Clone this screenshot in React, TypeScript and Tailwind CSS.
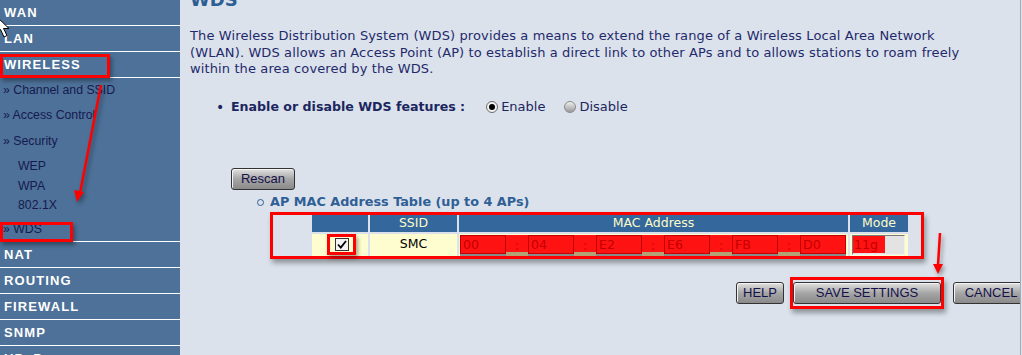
import React from "react";

const verdana = "font-['DejaVu_Sans','Verdana',sans-serif]";
const arial = "font-['Liberation_Sans','Arial',sans-serif]";

function NavItem({ label, children }: { label: string; children?: React.ReactNode }) {
  return (
    <div className="relative h-[26px] border-b border-white flex items-center pl-[4px] font-bold text-[13px] tracking-[1.1px] text-white shrink-0">
      {label}
      {children}
    </div>
  );
}

function SubItem({ label, className = "" }: { label: string; className?: string }) {
  return <div className={"flex items-center text-[12.3px] text-[#171a4f] " + className}>{label}</div>;
}

function Btn({ label, className = "" }: { label: string; className?: string }) {
  return (
    <div
      className={
        "h-[22px] flex items-center justify-center rounded-[3px] border border-[#333] bg-linear-to-b from-[#e2e2e2] via-[#a6a6a6] to-[#8a8a8a] shadow-[inset_1px_1px_0_#f4f4f4] text-[13px] text-[#14114a] shrink-0 " +
        arial +
        " " +
        className
      }
    >
      {label}
    </div>
  );
}

function MacBox({ v }: { v: string }) {
  return (
    <div className="w-[46px] h-[19px] bg-[#ff1212] border border-[#c00000] shadow-[0_2px_0_#8a8a8a] text-[12.5px] leading-[17px] pl-[2px] text-[#c40000]">
      {v}
    </div>
  );
}

function Colon() {
  return (
    <div className="w-[22px] h-[21px] flex flex-col">
      <div className="h-[17px] bg-[#ff1212] text-[12px] leading-[22px] text-center text-[#c40000]">:</div>
      <div className="h-[4px] bg-[#b3a274]" />
    </div>
  );
}

export default function App() {
  const mac = ["00", "04", "E2", "E6", "FB", "D0"];
  return (
    <div className={"relative flex w-[1022px] h-[355px] overflow-hidden bg-[#dbe2eb] " + arial}>
      {/* left menu */}
      <aside className="w-[180px] shrink-0 bg-[#4d7198] flex flex-col">
        <NavItem label="WAN" />
        <NavItem label="LAN" />
        <NavItem label="WIRELESS">
          <span className="absolute left-0 top-[2px] w-[110px] h-[24px] border-[3px] border-[#ff0000] shadow-[2px_3px_4px_rgba(0,0,0,0.35)]" />
        </NavItem>
        <div className="h-[164px] border-b border-white shrink-0 flex flex-col pl-[3px]">
          <SubItem label="» Channel and SSID" className="h-[25px]" />
          <SubItem label="» Access Control" className="h-[25px]" />
          <SubItem label="» Security" className="h-[26px]" />
          <SubItem label="WEP" className="h-[20px] mt-[2px] pl-[15px]" />
          <SubItem label="WPA" className="h-[20px] pl-[15px]" />
          <SubItem label="802.1X" className="h-[19px] pl-[15px]" />
          <div className="relative h-[20px] mt-[4px] flex items-center text-[12.3px] text-[#171a4f]">
            » WDS
            <span className="absolute -left-[3px] top-[3px] w-[73px] h-[20px] border-[3px] border-[#ff0000] shadow-[2px_3px_4px_rgba(0,0,0,0.35)]" />
          </div>
        </div>
        <NavItem label="NAT" />
        <NavItem label="ROUTING" />
        <NavItem label="FIREWALL" />
        <NavItem label="SNMP" />
        <NavItem label="UPnP" />
      </aside>

      {/* content */}
      <main className={"w-[841px] shrink-0 border-r border-[#a3abb6] overflow-hidden pl-[10px] flex flex-col " + verdana}>
        <div className="-mt-[11px] h-[22px] text-[18px] leading-[22px] font-bold text-[#2d5e93]">WDS</div>
        <p className="mt-[17px] text-[13px] tracking-[0.12px] leading-[16.5px] text-[#1f2a6c] whitespace-nowrap">
          The Wireless Distribution System (WDS) provides a means to extend the range of a Wireless Local Area Network
          <br />
          (WLAN). WDS allows an Access Point (AP) to establish a direct link to other APs and to allows stations to roam freely
          <br />
          within the area covered by the WDS.
        </p>

        <div className="mt-[21px] h-[17px] flex items-center text-[13px] text-[#1b2660]">
          <span className="ml-[26px] w-[15px] text-[14px]">•</span>
          <span className="font-bold text-[12.6px]">Enable or disable WDS features :</span>
          <span className="ml-[21px] w-[12px] h-[12px] rounded-full border border-[#6b6b6b] bg-[#f2f2f2] flex items-center justify-center">
            <span className="w-[6px] h-[6px] rounded-full bg-black" />
          </span>
          <span className="ml-[3px]">Enable</span>
          <span className="ml-[19px] w-[12px] h-[12px] rounded-full border border-[#8a8a8a] bg-linear-to-b from-[#f0f0f0] to-[#9a9a9a]" />
          <span className="ml-[3px]">Disable</span>
        </div>

        <Btn label="Rescan" className="mt-[52px] ml-[41px] w-[64px] text-[#1a1030]" />

        <div className="mt-[4px] h-[17px] flex items-center">
          <span className="ml-[67px] w-[7px] h-[7px] rounded-full border border-[#2f5f96]" />
          <span className="ml-[6px] font-bold text-[12.8px] text-[#2f5f96]">AP MAC Address Table (up to 4 APs)</span>
        </div>

        <div className="mt-[1px] ml-[80px] w-[654px] h-[47px] border-[3px] border-[#ff0000] shadow-[2px_4px_5px_rgba(0,0,0,0.35)] pl-[39px] flex flex-col gap-[2px] text-[12.5px]">
          <div className="flex gap-[2px] h-[17px] text-[#fdfcc8]">
            <div className="w-[56px] bg-[#34679b]" />
            <div className="w-[87px] bg-[#34679b] flex items-center justify-center">SSID</div>
            <div className="w-[389px] bg-[#34679b] flex items-center justify-center">MAC Address</div>
            <div className="w-[58px] bg-[#34679b] flex items-center justify-center">Mode</div>
          </div>
          <div className="flex gap-[2px] h-[22px]">
            <div className="w-[56px] bg-[#fdfdd0] flex items-start pl-[16px]">
              <div className="relative w-[29px] h-[21px] border-[3px] border-[#ff0000] shadow-[2px_3px_4px_rgba(0,0,0,0.35)] -ml-[1px] flex items-center justify-center">
                <div className="w-[14px] h-[13px] border border-[#333] bg-[#f4f4f4] flex items-center justify-center">
                  <svg width="10" height="9" viewBox="0 0 10 9">
                    <path d="M1 4.5 L3.8 7.5 L9 1" fill="none" stroke="#000" strokeWidth="1.8" />
                  </svg>
                </div>
              </div>
            </div>
            <div className="w-[87px] bg-[#fdfdd0] flex items-center justify-center text-black">SMC</div>
            <div className="w-[389px] bg-[#fdfdd0] flex items-start pl-[1px] pt-[1px]">
              {mac.map((m, i) => (
                <React.Fragment key={i}>
                  {i > 0 && <Colon />}
                  <MacBox v={m} />
                </React.Fragment>
              ))}
            </div>
            <div className="w-[58px] bg-[#fdfdd0] pl-[2px] pt-[1px]">
              <div className="w-[53px] h-[20px] border border-t-[#7a7a7a] border-l-[#7a7a7a] border-r-[#f0f0f0] border-b-[#f0f0f0] bg-[#e3e3e3] flex">
                <div className="w-[32px] h-[17px] bg-[#ff1212] text-[#c40000] pl-[1px] leading-[17px]">11g</div>
              </div>
            </div>
          </div>
        </div>

        <div className="mt-[18px] ml-[546px] flex items-center">
          <Btn label="HELP" className="w-[48px]" />
          <div className="ml-[6px] w-[154px] h-[32px] border-[3px] border-[#ff0000] shadow-[2px_4px_5px_rgba(0,0,0,0.35)] flex items-center">
            <Btn label="SAVE SETTINGS" className="w-[148px] from-[#c8c8c8] via-[#8e8e8e] to-[#6e6e6e]" />
          </div>
          <Btn label="CANCEL" className="ml-[9px] w-[76px]" />
        </div>
      </main>

      {/* annotation arrows */}
      <svg className="absolute inset-0 pointer-events-none" width="1022" height="355">
        <g style={{ filter: "drop-shadow(2px 3px 2px rgba(0,0,0,0.35))" }}>
          <line x1="101" y1="85" x2="80" y2="193" stroke="#ff0000" strokeWidth="2.5" />
          <polygon points="77,202 74,190 84,192" fill="#ff0000" />
          <line x1="940" y1="233" x2="938" y2="265" stroke="#ff0000" strokeWidth="2.5" />
          <polygon points="938,274 933,264 943,264" fill="#ff0000" />
        </g>
      </svg>

      {/* mouse cursor */}
      <svg className="absolute -left-[5px] top-[15px]" width="17" height="26" viewBox="0 0 17 26">
        <path d="M1 1 L1 19 L5.5 14.5 L9 22 L12 20.5 L8.5 13.5 L14 13.5 Z" fill="#fff" stroke="#000" strokeWidth="1" />
      </svg>
    </div>
  );
}
